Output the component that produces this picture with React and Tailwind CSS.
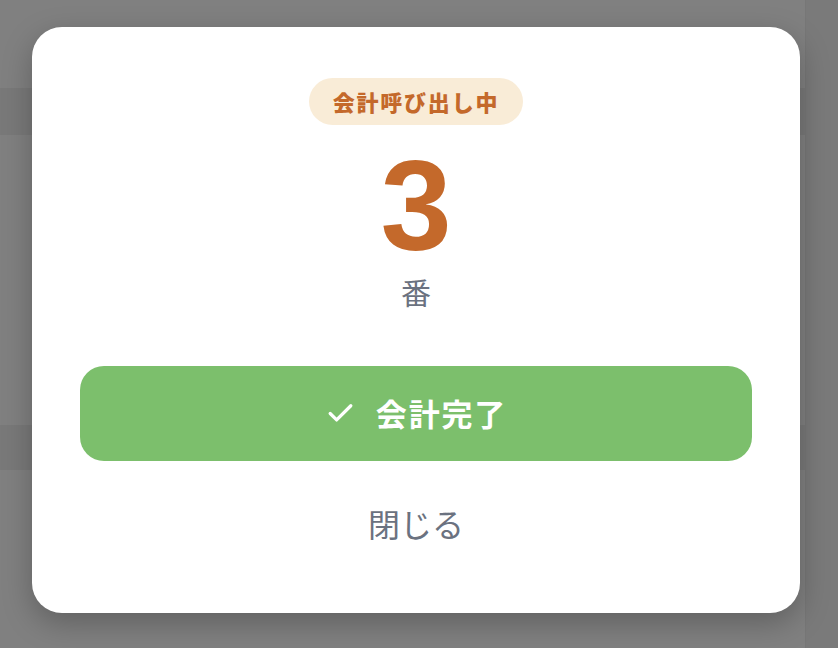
import { Check } from 'lucide-react'

const JP = { fontFamily: '"Noto Sans CJK JP", "Noto Sans", sans-serif' }

function BackdropPage() {
  // faint page content behind the overlay
  return (
    <div className="absolute inset-0 flex bg-[#808080]">
      <div className="flex-1 flex flex-col">
        <div className="h-[88px]" />
        <div className="h-[47px] bg-[#797979]" />
        <div className="h-[290px]" />
        <div className="h-[45px] bg-[#797979]" />
      </div>
      <div className="w-[33px] bg-[#7a7a7a] border-l border-[#777777]" />
    </div>
  )
}

export default function App() {
  return (
    <div className="relative w-[838px] h-[648px] overflow-hidden" style={JP}>
      <BackdropPage />
      <div className="absolute inset-0 flex items-start pl-[32px] pt-[27px]">
        <div className="w-[768px] h-[586px] bg-white rounded-[30px] shadow-[0_10px_30px_rgba(0,0,0,0.25)] flex flex-col items-center px-12 pt-[51px]">
          <span className="h-[47px] px-6 rounded-full bg-[#f9ecd7] text-[#c4692b] text-[22px] font-black tracking-[0.08em] flex items-center">
            会計呼び出し中
          </span>

          <div
            className="mt-[33px] text-[128px] leading-[96px] font-bold text-[#c4692b]"
            style={{ fontFamily: '"Liberation Sans", Arial, sans-serif' }}
          >
            3
          </div>

          <div className="mt-[22px] text-[30px] leading-[30px] text-[#6b7280]">番</div>

          <button className="mt-[60px] w-full h-[95px] rounded-[24px] bg-[#7cbf6c] text-white flex items-center justify-center gap-5">
            <Check size={31} strokeWidth={2.5} />
            <span className="text-[31px] font-bold tracking-[0.06em]">会計完了</span>
          </button>

          <button className="mt-[40px] text-[32px] leading-[44px] text-[#6b7280]">閉じる</button>
        </div>
      </div>
    </div>
  )
}
